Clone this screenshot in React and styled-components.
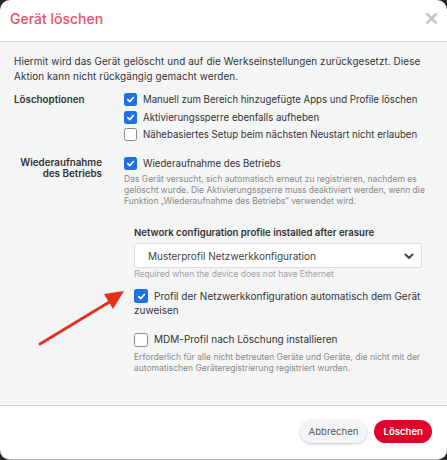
import React from 'react';
import styled, { createGlobalStyle } from 'styled-components';

const GlobalStyle = createGlobalStyle`
  html, body {
    margin: 0;
    padding: 0;
    background: #2a2a2a;
    font-family: Inter, "Noto Sans", sans-serif;
  }
`;

const Modal = styled.div`
  position: relative;
  height: 459px;
  display: flex;
  flex-direction: column;
  background: #fff;
  border-radius: 10px;
  overflow: hidden;
  border-bottom: 1px solid #bdbdbd;
`;

const Header = styled.div`
  height: 42px;
  flex: none;
  display: flex;
  align-items: center;
  justify-content: space-between;
  padding: 0 8px 4px 10px;
  box-sizing: border-box;
  border-bottom: 1px solid #d4d4d4;
`;

const Title = styled.h1`
  margin: 0;
  font-size: 14px;
  font-weight: 500;
  color: #e8506a;
`;

const Close = styled.span`
  color: #c4c4c4;
  font-size: 18px;
  line-height: 1;
  font-weight: 600;
`;

const Body = styled.div`
  flex: 1;
  background: #f4f5f5;
  padding: 12px 14px 0 14px;
  border-bottom: 1px solid #d4d4d4;
  color: #333;
`;

const Intro = styled.p`
  margin: 0 0 7px;
  font-size: 9.9px;
  line-height: 15px;
  letter-spacing: 0.1px;
`;

const Section = styled.div`
  display: grid;
  grid-template-columns: 110px 1fr;
  margin-top: ${p => p.$top || 0}px;
`;

const SideLabel = styled.div`
  font-size: 9.8px;
  font-weight: 600;
  line-height: 11.5px;
  text-align: ${p => (p.$right ? 'right' : 'left')};
  padding-right: ${p => (p.$right ? 22 : 0)}px;
  padding-top: ${p => p.$pt || 0}px;
`;

const Options = styled.div`
  display: flex;
  flex-direction: column;
`;

const Option = styled.label`
  display: flex;
  align-items: center;
  gap: 6px;
  height: 17.5px;
  flex: none;
  font-size: 9.65px;
  color: #333;
`;

const Box = styled.span`
  display: inline-flex;
  align-items: center;
  justify-content: center;
  flex: none;
  width: ${p => p.$size || 13}px;
  height: ${p => p.$size || 13}px;
  box-sizing: border-box;
  border-radius: 2.5px;
  background: ${p => (p.$checked ? '#1f6fe5' : '#fff')};
  border: ${p => (p.$checked ? 'none' : '1px solid #8a8a8a')};
  vertical-align: middle;
`;

const Hint = styled.p`
  margin: ${p => p.$mt || 0}px 0 0;
  font-size: 8.5px;
  line-height: 11px;
  color: ${p => p.$light ? '#a3a3a3' : '#8a8a8a'};
`;

const Indent = styled.div`
  padding-left: 120px;
  padding-right: 11px;
`;

const FieldLabel = styled.div`
  margin-top: 20px;
  font-size: 9.6px;
  font-weight: 600;
  line-height: 12px;
  color: #333;
`;

const Select = styled.div`
  margin-top: 4px;
  height: 25px;
  box-sizing: border-box;
  background: #fff;
  border: 1px solid #dcdcdc;
  border-radius: 3px;
  display: flex;
  align-items: center;
  justify-content: space-between;
  padding: 0 6px 0 13px;
  font-size: 10px;
  color: #444;
`;

const InlineCheck = styled.p`
  margin: ${p => p.$mt || 0}px 0 0;
  font-size: 10px;
  line-height: 13px;
  color: #333;
  ${Box} {
    margin-right: 6px;
    position: relative;
    top: -1px;
  }
`;

const Footer = styled.div`
  height: 53px;
  flex: none;
  display: flex;
  align-items: center;
  justify-content: flex-end;
  gap: 7px;
  padding: 0 15px 2px 0;
  box-sizing: border-box;
`;

const Button = styled.button`
  height: 23px;
  border: none;
  border-radius: 12px;
  padding: 0 9px;
  font-family: inherit;
  font-size: 9.6px;
  font-weight: ${p => (p.$danger ? 600 : 400)};
  background: ${p => (p.$danger ? '#e0042c' : '#f3f4f7')};
  color: ${p => (p.$danger ? '#fff' : '#555')};
  box-shadow: ${p => (p.$danger ? 'none' : '0 1px 3px rgba(0,0,0,0.22)')};
`;

const Arrow = styled.svg`
  position: absolute;
  left: 0;
  top: 0;
  pointer-events: none;
`;

const Check = ({ checked, size }) => (
  <Box $checked={checked} $size={size}>
    {checked && (
      <svg width="9" height="9" viewBox="0 0 10 10">
        <path d="M2 5.2 L4.2 7.3 L8.2 2.8" fill="none" stroke="#fff" strokeWidth="1.9" strokeLinecap="round" strokeLinejoin="round" />
      </svg>
    )}
  </Box>
);

export default function App() {
  return (
    <>
      <GlobalStyle />
      <Modal>
        <Header>
          <Title>Gerät löschen</Title>
          <Close>✕</Close>
        </Header>
        <Body>
          <Intro>
            Hiermit wird das Gerät gelöscht und auf die Werkseinstellungen zurückgesetzt. Diese Aktion kann nicht rückgängig gemacht werden.
          </Intro>
          <Section>
            <SideLabel $pt={3}>Löschoptionen</SideLabel>
            <Options>
              <Option><Check checked />Manuell zum Bereich hinzugefügte Apps und Profile löschen</Option>
              <Option><Check checked />Aktivierungssperre ebenfalls aufheben</Option>
              <Option><Check />Nähebasiertes Setup beim nächsten Neustart nicht erlauben</Option>
            </Options>
          </Section>
          <Section $top={11}>
            <SideLabel $right $pt={2}>Wiederaufnahme des Betriebs</SideLabel>
            <div>
              <Option><Check checked />Wiederaufnahme des Betriebs</Option>
              <Hint $mt={2}>
                Das Gerät versucht, sich automatisch erneut zu registrieren, nachdem es gelöscht wurde. Die Aktivierungssperre muss deaktiviert werden, wenn die Funktion „Wiederaufnahme des Betriebs“ verwendet wird.
              </Hint>
            </div>
          </Section>
          <Indent>
            <FieldLabel>Network configuration profile installed after erasure</FieldLabel>
            <Select>
              Musterprofil Netzwerkkonfiguration
              <svg width="12" height="12" viewBox="0 0 12 12">
                <path d="M2.5 4.5 L6 8 L9.5 4.5" fill="none" stroke="#444" strokeWidth="2" strokeLinecap="round" strokeLinejoin="round" />
              </svg>
            </Select>
            <Hint $light $mt={1}>Required when the device does not have Ethernet</Hint>
            <InlineCheck $mt={10}>
              <Check checked size={14} />Profil der Netzwerkkonfiguration automatisch dem Gerät zuweisen
            </InlineCheck>
            <InlineCheck $mt={16}>
              <Check size={14} />MDM-Profil nach Löschung installieren
            </InlineCheck>
            <Hint $mt={4}>
              Erforderlich für alle nicht betreuten Geräte und Geräte, die nicht mit der automatischen Geräteregistrierung registriert wurden.
            </Hint>
          </Indent>
        </Body>
        <Footer>
          <Button>Abbrechen</Button>
          <Button $danger>Löschen</Button>
        </Footer>
        <Arrow width="447" height="460" viewBox="0 0 447 460">
          <line x1="40" y1="344" x2="111" y2="301" stroke="#e5301c" strokeWidth="2.8" strokeLinecap="round" />
          <polygon points="124,291 104,294 113,309" fill="#e5301c" />
        </Arrow>
      </Modal>
    </>
  );
}
